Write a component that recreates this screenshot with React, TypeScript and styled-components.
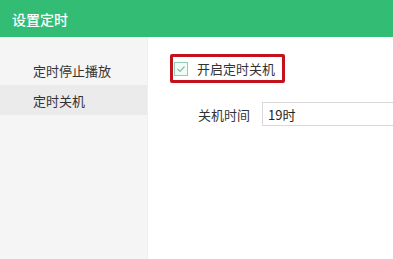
import React from "react";
import styled, { createGlobalStyle } from "styled-components";

const Global = createGlobalStyle`
  html, body { margin: 0; padding: 0; background: #fff; }
  body { font-family: "Microsoft YaHei", "Noto Sans CJK SC", sans-serif; }
`;

const Frame = styled.div`
  width: 393px;
  height: 259px;
  display: flex;
  flex-direction: column;
  overflow: hidden;
`;

const Header = styled.div`
  height: 37px;
  flex: none;
  background: #33bc74;
  color: #fff;
  font-size: 14px;
  font-weight: 500;
  display: flex;
  align-items: center;
  padding-left: 12px;
`;

const Body = styled.div`
  flex: 1;
  display: flex;
`;

const Sidebar = styled.div`
  width: 147px;
  flex: none;
  background: #f5f5f5;
  border-right: 1px solid #f0f0f0;
  padding-top: 18px;
  display: flex;
  flex-direction: column;
`;

const NavItem = styled.div<{ $active?: boolean }>`
  height: 30px;
  display: flex;
  align-items: center;
  padding-left: 33px;
  font-size: 13px;
  color: #333;
  background: ${(p) => (p.$active ? "#ebebeb" : "transparent")};
`;

const Content = styled.div`
  flex: 1;
  padding: 17px 0 0 22px;
  display: flex;
  flex-direction: column;
`;

const Highlight = styled.div`
  align-self: flex-start;
  border: 3px solid #c4121c;
  border-radius: 2px;
  height: 23px;
  display: flex;
  align-items: center;
  padding: 0 7px 0 1px;
  gap: 9px;
`;

const Check = styled.div`
  width: 12px;
  height: 12px;
  border: 1px solid #8fcfb4;
  background: #f3fbf7;
  display: flex;
  align-items: center;
  justify-content: center;
`;

const Label = styled.span`
  font-size: 13px;
  color: #333;
`;

const FieldRow = styled.div`
  margin-top: 19px;
  display: flex;
  align-items: center;
  padding-left: 28px;
  gap: 12px;
`;

const Input = styled.div`
  flex: 1;
  height: 22px;
  border: 1px solid #d9d9d9;
  border-right: none;
  display: flex;
  align-items: center;
  padding-left: 5px;
  font-size: 13px;
  color: #222;
`;

export default function App() {
  return (
    <>
      <Global />
      <Frame>
        <Header>设置定时</Header>
        <Body>
          <Sidebar>
            <NavItem>定时停止播放</NavItem>
            <NavItem $active>定时关机</NavItem>
          </Sidebar>
          <Content>
            <Highlight>
              <Check>
                <svg width="10" height="10" viewBox="0 0 10 10">
                  <path d="M1.5 5 L4 7.5 L8.5 2.5" fill="none" stroke="#7ec4a4" strokeWidth="1.2" />
                </svg>
              </Check>
              <Label>开启定时关机</Label>
            </Highlight>
            <FieldRow>
              <Label>关机时间</Label>
              <Input>19时</Input>
            </FieldRow>
          </Content>
        </Body>
      </Frame>
    </>
  );
}
